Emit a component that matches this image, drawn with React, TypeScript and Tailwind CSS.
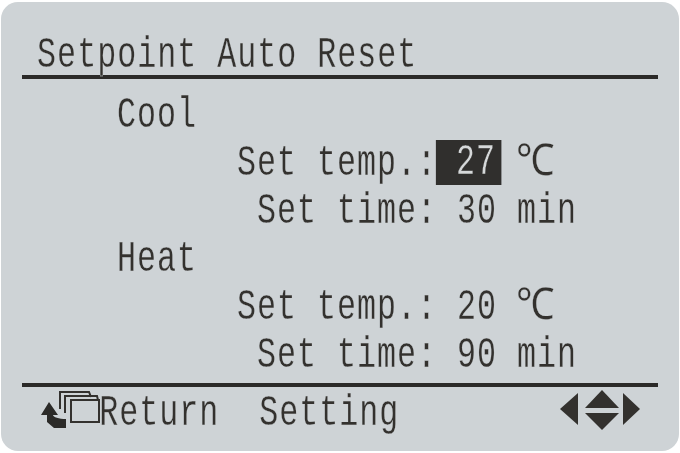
export default function App() {
  const rowText = "origin-left scale-x-[0.72] tracking-[1.38px] whitespace-pre h-[48px] leading-[48px] [-webkit-text-stroke:0.3px_#ced3d6]";
  const celsius = <span className="inline-block origin-left scale-x-[1.22] -ml-[2px]">℃</span>;
  const rows: React.ReactNode[] = [
    "    Cool",
    <>{"          Set temp.:"}<span className="inline-block h-[45px] leading-[45px] bg-[#302f2d] text-[#d5d8d9] [-webkit-text-stroke:0.3px_#302f2d] pl-[0.6px] -ml-[2px] pr-[7px] -mr-[5.6px] align-top mt-[1px]">{" 27"}</span>{" "}{celsius}</>,
    "           Set time: 30 min",
    "    Heat",
    <>{"          Set temp.: 20 "}{celsius}</>,
    "           Set time: 90 min",
  ];
  return (
    <div className="w-[680px] h-[453px] bg-white overflow-hidden pt-[2px] pl-[1px]">
      <div className="w-[678px] h-[449px] rounded-[17px] bg-[#ced3d6] text-[#33312e] text-[44px] flex flex-col pl-[21px] font-['Liberation_Mono',monospace] overflow-hidden blur-[0.4px]">
        <div className="w-[636px] h-[77px] border-b-[4px] border-[#2b2a28] pt-[29px]">
          <div className={`${rowText} pl-[21px] h-[44px] leading-[44px]`}>Setpoint Auto Reset</div>
        </div>
        <div className="pt-[12px] pl-[15px] h-[304px]">
          {rows.map((r, i) => (
            <div key={i} className={rowText}>{r}</div>
          ))}
        </div>
        <div className="w-[636px] border-t-[4px] border-[#2b2a28] h-[64px] flex items-start relative">
          <svg width="66" height="44" viewBox="0 0 66 44" className="absolute left-[18px] top-[2px]" fill="none" stroke="#33312e" strokeWidth="2">
            <path d="M20 20V3h29l2 5" />
            <path d="M25 24V7h32l1 4" />
            <path d="M31 11h28v22H31z" />
            <path d="M9 13l9 13h-5c0 2 6 4 13 4v9H14l-7-6v-7H1z" fill="#2b2a28" stroke="none" />
          </svg>
          <div className={`${rowText} pl-[24px] mt-[2px]`}>{"   Return  Setting"}</div>
          <svg width="84" height="44" viewBox="0 0 84 44" className="absolute left-[538px] top-[3px]" fill="#33312e">
            <path d="M18 3v32L0 19z" />
            <path d="M42 0l17 18H25z" />
            <path d="M25 23h34L42 40z" />
            <path d="M63 3v32l17-16z" />
          </svg>
        </div>
      </div>
    </div>
  );
}
